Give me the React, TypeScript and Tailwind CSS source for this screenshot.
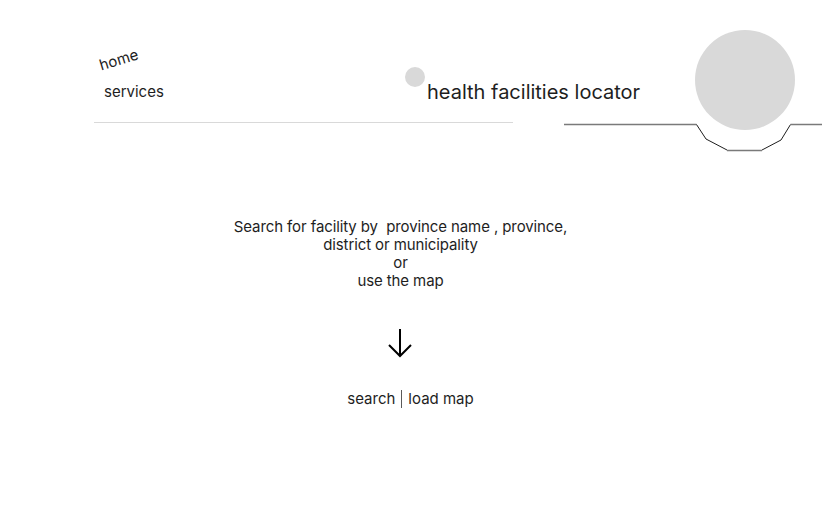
import React from "react";

function Notch() {
  return (
    <svg
      className="absolute left-[560px] top-[118px]"
      width="271"
      height="40"
      viewBox="0 0 271 40"
      fill="none"
    >
      <path d="M4 6.5H136.5" stroke="#7a7a7a" strokeWidth="1.5" />
      <path d="M136.5 6.5L146 21L167 32" stroke="#1e1e1e" strokeWidth="1" />
      <path d="M167 32.5H202" stroke="#7a7a7a" strokeWidth="1.5" />
      <path d="M202 32L221 22L230.5 6.5" stroke="#1e1e1e" strokeWidth="1" />
      <path d="M230.5 6.5H262" stroke="#7a7a7a" strokeWidth="1.5" />
    </svg>
  );
}

function ArrowDown() {
  return (
    <svg width="24" height="30" viewBox="0 0 24 30" fill="none">
      <path d="M12 1V28" stroke="#000" strokeWidth="2" />
      <path d="M1 17L12 28L23 17" stroke="#000" strokeWidth="2" />
    </svg>
  );
}

export default function App() {
  return (
    <div className="w-[831px] h-[508px] bg-white overflow-hidden font-['Inter',sans-serif] text-[#1e1e1e]">
      <header className="relative h-[160px]">
        <nav className="pt-[51px] pl-[94px]">
          <div className="w-[419px] h-[72px] border-b border-[#d9d9d9] text-[15px] leading-[18px]">
            <div className="ml-[5px] w-fit -rotate-[17deg]">home</div>
            <div className="ml-[10px] mt-[14px]">services</div>
          </div>
        </nav>

        <div className="absolute left-[405px] top-[67px] flex items-start">
          <span className="w-[20px] h-[20px] rounded-full bg-[#d9d9d9]" />
          <h1 className="mt-[13px] ml-[2px] text-[20px] leading-[24px] font-normal text-[#1e1e1e]">
            health facilities locator
          </h1>
        </div>

        <div className="absolute left-[695px] top-[30px] w-[100px] h-[100px] rounded-full bg-[#d9d9d9]" />
        <Notch />
      </header>

      <main className="flex flex-col items-center">
        <p className="mt-[58px] ml-[-30px] text-center text-[15px] leading-[18px] tracking-[-0.1px]">
          Search for facility by&nbsp; province name , province,
          <br />
          district or municipality
          <br />
          or
          <br />
          use the map
        </p>

        <div className="mt-[38px] ml-[-31px]">
          <ArrowDown />
        </div>

        <div className="mt-[32px] ml-[-10px] flex items-center text-[15px] leading-[18px]">
          <span>search</span>
          <span className="mx-[6px] w-px h-[18px] bg-[#5a5a5a]" />
          <span>load map</span>
        </div>
      </main>
    </div>
  );
}
